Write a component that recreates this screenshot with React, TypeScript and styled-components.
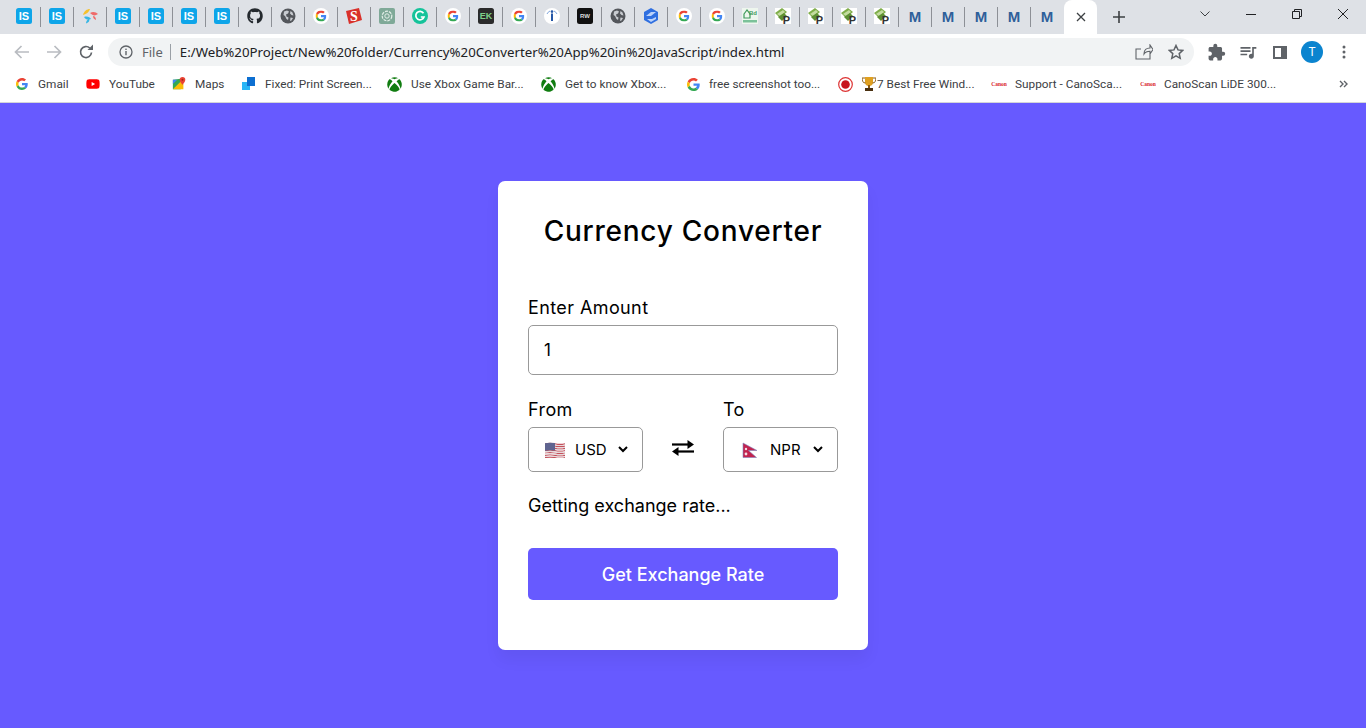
import React from "react";
import styled, { createGlobalStyle } from "styled-components";
import { FaGithub, FaXbox, FaYoutube } from "react-icons/fa";
import { MdExtension, MdQueueMusic } from "react-icons/md";

const GlobalStyle = createGlobalStyle`
  * {
    box-sizing: border-box;
  }
  html, body {
    margin: 0;
    height: 100%;
    overflow: hidden;
  }
  body {
    font-family: "Open Sans", "Liberation Sans", sans-serif;
  }
`;

const uiFont = `"Noto Sans", "Open Sans", sans-serif`;
const barFont = `Roboto, "Noto Sans", sans-serif`;
const cardFont = `Inter, "Open Sans", sans-serif`;
const accent = "#675aff";

const Page = styled.div`
  width: 1366px;
  height: 728px;
  display: flex;
  flex-direction: column;
  background: ${accent};
`;

const TabStrip = styled.div`
  height: 34px;
  flex: none;
  display: flex;
  align-items: flex-start;
  padding-left: 7px;
  background: #dee1e6;
`;

const TabCell = styled.div<{ $last?: boolean }>`
  width: 33px;
  height: 34px;
  flex: none;
  display: flex;
  align-items: center;
  justify-content: center;
  padding-bottom: 2px;
  position: relative;
  &::after {
    content: "";
    display: ${(p) => (p.$last ? "none" : "block")};
    position: absolute;
    right: -1px;
    top: 7px;
    height: 20px;
    width: 1px;
    background: #8d9096;
  }
`;

const ActiveTab = styled.div`
  width: 33px;
  height: 34px;
  flex: none;
  display: flex;
  align-items: center;
  justify-content: center;
  margin-left: 1px;
  background: #fff;
  border-radius: 8px 8px 0 0;
`;

const NewTab = styled.div`
  width: 44px;
  height: 34px;
  flex: none;
  display: flex;
  align-items: center;
  justify-content: center;
`;

const WindowControls = styled.div`
  margin-left: auto;
  display: flex;
  height: 28px;
  align-items: center;
`;

const WindowButton = styled.div<{ $w: number }>`
  width: ${(p) => p.$w}px;
  height: 28px;
  display: flex;
  align-items: center;
  justify-content: center;
`;

const Toolbar = styled.div`
  height: 33px;
  flex: none;
  display: flex;
  align-items: center;
  padding: 3px 0 0 6px;
  background: #fff;
`;

const NavButton = styled.div`
  width: 32px;
  height: 28px;
  flex: none;
  display: flex;
  align-items: center;
  justify-content: center;
`;

const Omnibox = styled.div`
  width: 1086px;
  height: 28px;
  margin-left: 6px;
  flex: none;
  display: flex;
  align-items: center;
  padding: 0 10px 0 11px;
  border-radius: 14px;
  background: #f1f3f4;
`;

const SiteChip = styled.span`
  display: flex;
  align-items: center;
  gap: 9px;
  font: 13px ${uiFont};
  color: #5f6368;
  padding-right: 7px;
  border-right: 1px solid #9aa0a6;
  line-height: 16px;
`;

const Url = styled.span`
  margin-left: 9px;
  font: 13.25px ${uiFont};
  color: #202124;
  white-space: nowrap;
`;

const OmniActions = styled.div`
  margin-left: auto;
  display: flex;
  gap: 15px;
  align-items: center;
`;

const ToolActions = styled.div`
  display: flex;
  align-items: center;
  margin-left: 6px;
`;

const ToolButton = styled.div<{ $w: number }>`
  width: ${(p) => p.$w}px;
  height: 28px;
  display: flex;
  align-items: center;
  justify-content: center;
`;

const Avatar = styled.div`
  width: 22px;
  height: 22px;
  border-radius: 50%;
  background: #0b84cf;
  color: #fff;
  font: 12px/22px ${uiFont};
  text-align: center;
`;

const BookmarkBar = styled.div`
  height: 36px;
  flex: none;
  display: flex;
  align-items: center;
  padding: 0 0 1px 16px;
  background: #fff;
  border-bottom: 1px solid #d3d5d9;
`;

const Bookmark = styled.div<{ $w: number; $gap?: number }>`
  width: ${(p) => p.$w}px;
  flex: none;
  display: flex;
  align-items: center;
  gap: ${(p) => p.$gap ?? 9}px;
  font: 11.8px ${barFont};
  color: #3c4043;
  white-space: nowrap;
`;

const TrophyLabel = styled.span`
  display: flex;
  align-items: center;
  gap: 1px;
`;

const MoreBookmarks = styled.div`
  margin-left: auto;
  margin-right: 18px;
  display: flex;
  align-items: center;
`;

const Main = styled.main`
  flex: 1;
  display: flex;
  align-items: center;
  justify-content: center;
  background: ${accent};
`;

const Card = styled.div`
  width: 370px;
  height: 469px;
  padding: 30px 30px 0;
  border-radius: 7px;
  background: #fff;
  box-shadow: 0 10px 15px rgba(0, 0, 0, 0.05);
  font-family: ${cardFont};
`;

const Title = styled.h2`
  margin: 0 0 43px;
  height: 40px;
  font-size: 28px;
  line-height: 40px;
  font-weight: 500;
  letter-spacing: 0.75px;
  color: #000;
  text-align: center;
  white-space: nowrap;
`;

const FieldLabel = styled.label`
  display: block;
  font-size: 18px;
  line-height: 27px;
  letter-spacing: 0.4px;
  color: #000;
`;

const AmountInput = styled.input`
  display: block;
  width: 100%;
  height: 50px;
  margin: 4px 0 21px;
  padding: 0 15px;
  border: 1px solid #999;
  border-radius: 5px;
  background: #fff;
  font-family: ${cardFont};
  font-size: 17px;
  color: #000;
  outline: none;
`;

const ConvertRow = styled.div`
  display: flex;
  align-items: flex-end;
  justify-content: space-between;
`;

const SwapIcon = styled.div`
  height: 45px;
  padding-bottom: 3px;
  display: flex;
  align-items: center;
  justify-content: center;
`;

const SelectBox = styled.div`
  width: 115px;
  height: 45px;
  margin-top: 4px;
  padding-left: 15px;
  display: flex;
  align-items: center;
  border: 1px solid #999;
  border-radius: 5px;
  font-size: 15px;
  color: #000;
`;

const Code = styled.span`
  margin-left: 9px;
  width: 43px;
`;

const RateText = styled.p`
  margin: 20px 0 29px;
  height: 27px;
  font-size: 18px;
  line-height: 27px;
  color: #000;
  white-space: nowrap;
`;

const SubmitButton = styled.button`
  display: block;
  width: 100%;
  height: 52px;
  border: none;
  border-radius: 5px;
  background: ${accent};
  color: #fff;
  font-family: ${cardFont};
  font-size: 18px;
  font-weight: 500;
`;

const GoogleLogo = ({ size = 14 }: { size?: number }) => (
  <svg width={size} height={size} viewBox="0 0 48 48">
    <path fill="#EA4335" d="M24 9.5c3.54 0 6.71 1.22 9.21 3.6l6.85-6.85C35.9 2.38 30.47 0 24 0 14.62 0 6.51 5.38 2.56 13.22l7.98 6.19C12.43 13.72 17.74 9.5 24 9.5z" />
    <path fill="#4285F4" d="M46.98 24.55c0-1.57-.15-3.09-.38-4.55H24v9.02h12.94c-.58 2.96-2.26 5.48-4.78 7.18l7.73 6c4.51-4.18 7.09-10.36 7.09-17.65z" />
    <path fill="#FBBC05" d="M10.53 28.59c-.48-1.45-.76-2.99-.76-4.59s.27-3.14.76-4.59l-7.98-6.19C.92 16.46 0 20.12 0 24c0 3.88.92 7.54 2.56 10.78l7.97-6.19z" />
    <path fill="#34A853" d="M24 48c6.48 0 11.93-2.13 16.08-5.81l-7.73-6c-2.15 1.45-4.92 2.3-8.34 2.3-6.26 0-11.57-4.22-13.47-9.91l-7.98 6.19C6.51 42.62 14.62 48 24 48z" />
  </svg>
);

const GoogleTab = () => (
  <svg width="16" height="16" viewBox="0 0 16 16">
    <circle cx="8" cy="8" r="8" fill="#fff" />
    <svg x="2.5" y="2.5" width="11" height="11" viewBox="0 0 48 48">
      <path fill="#EA4335" d="M24 9.5c3.54 0 6.71 1.22 9.21 3.6l6.85-6.85C35.9 2.38 30.47 0 24 0 14.62 0 6.51 5.38 2.56 13.22l7.98 6.19C12.43 13.72 17.74 9.5 24 9.5z" />
      <path fill="#4285F4" d="M46.98 24.55c0-1.57-.15-3.09-.38-4.55H24v9.02h12.94c-.58 2.96-2.26 5.48-4.78 7.18l7.73 6c4.51-4.18 7.09-10.36 7.09-17.65z" />
      <path fill="#FBBC05" d="M10.53 28.59c-.48-1.45-.76-2.99-.76-4.59s.27-3.14.76-4.59l-7.98-6.19C.92 16.46 0 20.12 0 24c0 3.88.92 7.54 2.56 10.78l7.97-6.19z" />
      <path fill="#34A853" d="M24 48c6.48 0 11.93-2.13 16.08-5.81l-7.73-6c-2.15 1.45-4.92 2.3-8.34 2.3-6.26 0-11.57-4.22-13.47-9.91l-7.98 6.19C6.51 42.62 14.62 48 24 48z" />
    </svg>
  </svg>
);

const LetterTile = ({ bg, fg, text, size }: { bg: string; fg: string; text: string; size: number }) => (
  <svg width="16" height="16" viewBox="0 0 16 16">
    <rect width="16" height="16" rx="2.5" fill={bg} />
    <text x="8" y={8 + size * 0.36} textAnchor="middle" fontSize={size} fontWeight="700" fontFamily="Liberation Sans, sans-serif" fill={fg}>
      {text}
    </text>
  </svg>
);

const Globe = () => (
  <svg width="16" height="16" viewBox="0 0 16 16">
    <circle cx="8" cy="8" r="7.500" fill="#54575c" />
    <path fill="#c9ccd1" d="M4 3.500l3-1 2 1-1 2-2 1 .5 2 2 1-.5 2.500-1.500-1-1.500-3-1.500-1zM10.500 3l2 1.500 1 3-2-.5-1.500-1.500zM10.500 9.500l2.500.5-1.500 2.500-1.500.5z" />
  </svg>
);

const Swirl = () => (
  <svg width="16" height="16" viewBox="0 0 16 16">
    <path d="M1 7c1-4 4-6 7-6-1 3-3 5-7 6z" fill="#f6c12b" />
    <path d="M8 5c3-2 6-1 8 1-3 2-5 2-8-1z" fill="#ef6a6a" />
    <path d="M2 9c3-1 6 0 7 2-3 1-5 1-7-2z" fill="#35b6e4" />
    <path d="M4 15.500c0-2 1-4 3-5 1 2 0 4-3 5z" fill="#35b6e4" />
    <path d="M11 8c2 0 3 2 3 4-2-1-3-2-3-4z" fill="#ef6a6a" />
  </svg>
);

const SlideS = () => (
  <svg width="16" height="16" viewBox="0 0 16 16">
    <path d="M0 3l13-3 3 12-13 4z" fill="#d9302a" />
    <text x="8" y="13" textAnchor="middle" fontSize="14" fontWeight="700" fontFamily="Liberation Serif, serif" fill="#fff">S</text>
  </svg>
);

const GptTile = () => (
  <svg width="16" height="16" viewBox="0 0 16 16">
    <rect width="16" height="16" rx="2" fill="#7fa998" />
    <circle cx="8" cy="8" r="4.800" fill="none" stroke="#e4efe9" strokeWidth="1.200" strokeDasharray="3 1" />
    <circle cx="8" cy="8" r="2.200" fill="none" stroke="#e4efe9" strokeWidth="1" />
  </svg>
);

const Grammarly = () => (
  <svg width="16" height="16" viewBox="0 0 16 16">
    <circle cx="8" cy="8" r="8" fill="#15c39a" />
    <path d="M11.500 5.200A4.200 4.200 0 1 0 12 9H8.800" fill="none" stroke="#fff" strokeWidth="1.700" />
  </svg>
);

const InfoTab = () => (
  <svg width="16" height="16" viewBox="0 0 16 16">
    <circle cx="8" cy="8" r="8" fill="#fff" />
    <circle cx="8" cy="3.600" r="1.300" fill="#2456a6" />
    <rect x="7" y="5.500" width="2" height="7.500" fill="#2456a6" />
    <path d="M3 6a6 6 0 0 1 3-3M13 6a6 6 0 0 0-3-3" stroke="#7fa6dc" fill="none" />
  </svg>
);

const HexTab = () => (
  <svg width="16" height="16" viewBox="0 0 16 16">
    <path d="M8 0l7 4v8l-7 4-7-4V4z" fill="#2f6fe0" />
    <path d="M3 8l5-4 5 0-5 4zM4 11l5 0 4-2v2l-5 3z" fill="#bcd3fa" />
  </svg>
);

const HouseTab = () => (
  <svg width="16" height="16" viewBox="0 0 16 16">
    <rect width="16" height="16" fill="#eef6ee" />
    <path d="M2 6l3-4 3 4v4H2z" fill="none" stroke="#3f9a5b" strokeWidth="1.200" />
    <text x="11" y="7" textAnchor="middle" fontSize="6" fontWeight="700" fontFamily="Liberation Sans, sans-serif" fill="#3f9a5b">Bd</text>
    <rect x="1" y="12" width="14" height="2.500" fill="#7cc29a" />
  </svg>
);

const PTab = () => (
  <svg width="16" height="16" viewBox="0 0 16 16">
    <rect width="16" height="16" fill="#fff" />
    <path d="M0 5l7-5 5 4-7 6z" fill="#7fae4a" />
    <path d="M2 6l6-4 2 2-5 4z" fill="#c4dca0" />
    <path d="M3 9l6-4 3 3-5 5z" fill="#5e8f33" />
    <text x="11.500" y="15.500" textAnchor="middle" fontSize="11" fontWeight="700" fontFamily="Liberation Sans, sans-serif" fill="#333">P</text>
  </svg>
);

const MTab = () => (
  <svg width="16" height="16" viewBox="0 0 16 16">
    <text x="8" y="14" textAnchor="middle" fontSize="15" fontWeight="700" fontFamily="Liberation Sans, sans-serif" fill="#2f5f9a">M</text>
  </svg>
);

const isTile = <LetterTile bg="#0ea5e9" fg="#fff" text="IS" size={11} />;

const tabIcons: React.ReactNode[] = [
  isTile,
  isTile,
  <Swirl />,
  isTile,
  isTile,
  isTile,
  isTile,
  <FaGithub size={16} color="#24292e" />,
  <Globe />,
  <GoogleTab />,
  <SlideS />,
  <GptTile />,
  <Grammarly />,
  <GoogleTab />,
  <LetterTile bg="#2b2b2b" fg="#7fd08a" text="EK" size={9} />,
  <GoogleTab />,
  <InfoTab />,
  <LetterTile bg="#111" fg="#ddd" text="RW" size={6} />,
  <Globe />,
  <HexTab />,
  <GoogleTab />,
  <GoogleTab />,
  <HouseTab />,
  <PTab />,
  <PTab />,
  <PTab />,
  <PTab />,
  <MTab />,
  <MTab />,
  <MTab />,
  <MTab />,
  <MTab />,
];

const MapsIcon = () => (
  <svg width="14" height="14" viewBox="0 0 16 16">
    <path d="M1 3l9-1v12H1z" fill="#34a853" />
    <path d="M1 14l9-9 3 3v6z" fill="#fbbc05" />
    <path d="M1 3h5L1 8z" fill="#4285f4" />
    <path d="M12 0a3.200 3.200 0 0 1 3.200 3.200C15.200 5.500 12 9 12 9S8.800 5.500 8.800 3.200A3.200 3.200 0 0 1 12 0z" fill="#ea4335" />
    <circle cx="12" cy="3.200" r="1.100" fill="#a52714" />
  </svg>
);

const FixedIcon = () => (
  <svg width="14" height="14" viewBox="0 0 14 14">
    <rect x="0" y="5" width="8" height="8" fill="#29b6f6" />
    <rect x="5" y="0" width="8" height="9" fill="#0d6fd1" />
  </svg>
);

const RecordIcon = () => (
  <svg width="15" height="15" viewBox="0 0 15 15">
    <circle cx="7.500" cy="7.500" r="6.800" fill="#fff" stroke="#d33" strokeWidth="1.200" />
    <circle cx="7.500" cy="7.500" r="4.300" fill="#c8141c" />
  </svg>
);

const TrophyIcon = () => (
  <svg width="14" height="14" viewBox="0 0 14 14">
    <path d="M3 0h8v5a4 4 0 0 1-8 0z" fill="#e0a020" />
    <path d="M3 1H0c0 3 1 5 3.500 5M11 1h3c0 3-1 5-3.500 5" fill="none" stroke="#8a5a10" />
    <rect x="6" y="8" width="2" height="3" fill="#8a5a10" />
    <rect x="3" y="11" width="8" height="3" fill="#4a3010" />
  </svg>
);

const CanonIcon = () => (
  <svg width="16" height="6" viewBox="0 0 16 6">
    <text x="8" y="5" textAnchor="middle" fontSize="5.500" fontWeight="700" fontFamily="Liberation Serif, serif" fill="#d8232a">Canon</text>
  </svg>
);

// both flags sit in a 22px box, the Nepal pennant is just narrower inside it
const UsaFlag = () => (
  <svg width="22" height="16" viewBox="0 0 22 16">
    {Array.from({ length: 7 }).map((_, i) => (
      <path key={i} d={`M1 ${i * 2.3 + 1.2}q5 -1 10 0t10 0v1.200q-5 1 -10 0t-10 0z`} fill="#c4515c" />
    ))}
    {Array.from({ length: 6 }).map((_, i) => (
      <path key={i} d={`M1 ${i * 2.3 + 2.4}q5 -1 10 0t10 0v1.100q-5 1 -10 0t-10 0z`} fill="#e6dadc" />
    ))}
    <path d="M1 1.200q4 -1 10 -.2v7.500q-6 -.6 -10 .2z" fill="#5f6490" />
  </svg>
);

const NepalFlag = () => (
  <svg width="22" height="16" viewBox="0 0 22 16">
    <path d="M4 1l14 7.500H9.500l8 7H4z" fill="#c2234f" stroke="#7d86bd" strokeWidth="0.600" />
    <circle cx="7" cy="7" r="1.200" fill="#f3dde4" />
    <circle cx="7" cy="12" r="1.400" fill="#f3dde4" />
  </svg>
);

const Chevron = () => (
  <svg width="10" height="7" viewBox="0 0 10 7">
    <path d="M1 1l4 4 4-4" fill="none" stroke="#000" strokeWidth="2" />
  </svg>
);

const SwapArrows = () => (
  <svg width="22" height="18" viewBox="0 0 22 18">
    <path d="M0 5.500h17" stroke="#000" strokeWidth="2.200" />
    <path d="M15.500 1l6.500 4.500-6.500 4.500z" fill="#000" />
    <path d="M22 12.500H5" stroke="#000" strokeWidth="2.200" />
    <path d="M6.500 8l-6.500 4.500 6.500 4.500z" fill="#000" />
  </svg>
);

const App: React.FC = () => {
  return (
    <Page>
      <GlobalStyle />
      <TabStrip>
        {tabIcons.map((icon, i) => (
          <TabCell key={i} $last={i === tabIcons.length - 1}>
            {icon}
          </TabCell>
        ))}
        <ActiveTab>
          <svg width="10" height="10" viewBox="0 0 10 10">
            <path d="M1 1l8 8M9 1l-8 8" stroke="#3c4043" strokeWidth="1.300" />
          </svg>
        </ActiveTab>
        <NewTab>
          <svg width="12" height="12" viewBox="0 0 12 12">
            <path d="M6 0v12M0 6h12" stroke="#3c4043" strokeWidth="1.600" />
          </svg>
        </NewTab>
        <WindowControls>
          <WindowButton $w={46}>
            <svg width="10" height="6" viewBox="0 0 10 6">
              <path d="M.5.500L5 5 9.500.500" fill="none" stroke="#3c4043" />
            </svg>
          </WindowButton>
          <WindowButton $w={46}>
            <svg width="10" height="1" viewBox="0 0 10 1">
              <rect width="10" height="1" fill="#202124" />
            </svg>
          </WindowButton>
          <WindowButton $w={46}>
            <svg width="10" height="10" viewBox="0 0 10 10">
              <path d="M.5 2.500h7v7h-7zM2.500 2.500v-2h7v7h-2" fill="none" stroke="#202124" />
            </svg>
          </WindowButton>
          <WindowButton $w={46}>
            <svg width="10" height="10" viewBox="0 0 10 10">
              <path d="M0 0l10 10M10 0L0 10" stroke="#202124" />
            </svg>
          </WindowButton>
        </WindowControls>
      </TabStrip>
      <Toolbar>
        <NavButton>
          <svg width="16" height="14" viewBox="0 0 16 14">
            <path d="M15 7H2M7.500 1L1.500 7l6 6" fill="none" stroke="#b9bcc1" strokeWidth="1.700" />
          </svg>
        </NavButton>
        <NavButton>
          <svg width="16" height="14" viewBox="0 0 16 14">
            <path d="M1 7h13M8.500 1l6 6-6 6" fill="none" stroke="#b9bcc1" strokeWidth="1.700" />
          </svg>
        </NavButton>
        <NavButton>
          <svg width="16" height="16" viewBox="0 0 16 16">
            <path d="M13.500 8.500A5.500 5.500 0 1 1 11.800 4" fill="none" stroke="#5f6368" strokeWidth="1.700" />
            <path d="M9.500 6H15V.500z" fill="#5f6368" />
          </svg>
        </NavButton>
        <Omnibox>
          <SiteChip>
            <svg width="14" height="14" viewBox="0 0 14 14">
              <circle cx="7" cy="7" r="6" fill="none" stroke="#5f6368" strokeWidth="1.300" />
              <rect x="6.300" y="6" width="1.400" height="4.200" fill="#5f6368" />
              <rect x="6.300" y="3.600" width="1.400" height="1.400" fill="#5f6368" />
            </svg>
            File
          </SiteChip>
          <Url>E:/Web%20Project/New%20folder/Currency%20Converter%20App%20in%20JavaScript/index.html</Url>
          <OmniActions>
            <svg width="18" height="16" viewBox="0 0 18 16">
              <path d="M15 10v5H1V5h5M9 10c0-4 2.500-6 6-6V1l3 4.500L15 10V7.200c-3 0-5 1-6 2.800z" fill="none" stroke="#5f6368" strokeWidth="1.100" />
            </svg>
            <svg width="16" height="16" viewBox="0 0 16 16">
              <path d="M8 1.500l2 4.400 4.800.5-3.600 3.200 1 4.700L8 11.900l-4.200 2.400 1-4.700L1.200 6.400 6 5.900z" fill="none" stroke="#5f6368" strokeWidth="1.500" />
            </svg>
          </OmniActions>
        </Omnibox>
        <ToolActions>
          <ToolButton $w={32}>
            <MdExtension size={19} color="#5f6368" />
          </ToolButton>
          <ToolButton $w={32}>
            <MdQueueMusic size={20} color="#5f6368" />
          </ToolButton>
          <ToolButton $w={32}>
            <svg width="14" height="13" viewBox="0 0 14 13">
              <path d="M1 1h12v11H1z" fill="#fff" stroke="#5f6368" strokeWidth="2" />
              <rect x="8" y="1" width="5" height="11" fill="#5f6368" />
            </svg>
          </ToolButton>
          <ToolButton $w={32}>
            <Avatar>T</Avatar>
          </ToolButton>
          <ToolButton $w={32}>
            <svg width="4" height="14" viewBox="0 0 4 14">
              <circle cx="2" cy="2" r="1.500" fill="#5f6368" />
              <circle cx="2" cy="7" r="1.500" fill="#5f6368" />
              <circle cx="2" cy="12" r="1.500" fill="#5f6368" />
            </svg>
          </ToolButton>
        </ToolActions>
      </Toolbar>
      <BookmarkBar>
        <Bookmark $w={70} $gap={10}>
          <GoogleLogo size={12} />
          Gmail
        </Bookmark>
        <Bookmark $w={86}>
          <FaYoutube size={14} color="#f00" />
          YouTube
        </Bookmark>
        <Bookmark $w={70}>
          <MapsIcon />
          Maps
        </Bookmark>
        <Bookmark $w={145}>
          <FixedIcon />
          Fixed: Print Screen...
        </Bookmark>
        <Bookmark $w={154}>
          <FaXbox size={15} color="#107c10" />
          Use Xbox Game Bar...
        </Bookmark>
        <Bookmark $w={146}>
          <FaXbox size={15} color="#107c10" />
          Get to know Xbox...
        </Bookmark>
        <Bookmark $w={151}>
          <GoogleLogo size={13} />
          free screenshot too...
        </Bookmark>
        <Bookmark $w={153}>
          <RecordIcon />
          <TrophyLabel>
            <TrophyIcon />7 Best Free Wind...
          </TrophyLabel>
        </Bookmark>
        <Bookmark $w={149} $gap={8}>
          <CanonIcon />
          Support - CanoSca...
        </Bookmark>
        <Bookmark $w={150} $gap={8}>
          <CanonIcon />
          CanoScan LiDE 300...
        </Bookmark>
        <MoreBookmarks>
          <svg width="9" height="8" viewBox="0 0 9 8">
            <path d="M1 1l3 3-3 3M5 1l3 3-3 3" fill="none" stroke="#5f6368" strokeWidth="1.400" />
          </svg>
        </MoreBookmarks>
      </BookmarkBar>
      <Main>
        <Card>
          <Title>Currency Converter</Title>
          <FieldLabel>Enter Amount</FieldLabel>
          <AmountInput type="text" value="1" readOnly />
          <ConvertRow>
            <div>
              <FieldLabel>From</FieldLabel>
              <SelectBox>
                <UsaFlag />
                <Code>USD</Code>
                <Chevron />
              </SelectBox>
            </div>
            <SwapIcon>
              <SwapArrows />
            </SwapIcon>
            <div>
              <FieldLabel>To</FieldLabel>
              <SelectBox>
                <NepalFlag />
                <Code>NPR</Code>
                <Chevron />
              </SelectBox>
            </div>
          </ConvertRow>
          <RateText>Getting exchange rate...</RateText>
          <SubmitButton type="button">Get Exchange Rate</SubmitButton>
        </Card>
      </Main>
    </Page>
  );
};

export default App;
